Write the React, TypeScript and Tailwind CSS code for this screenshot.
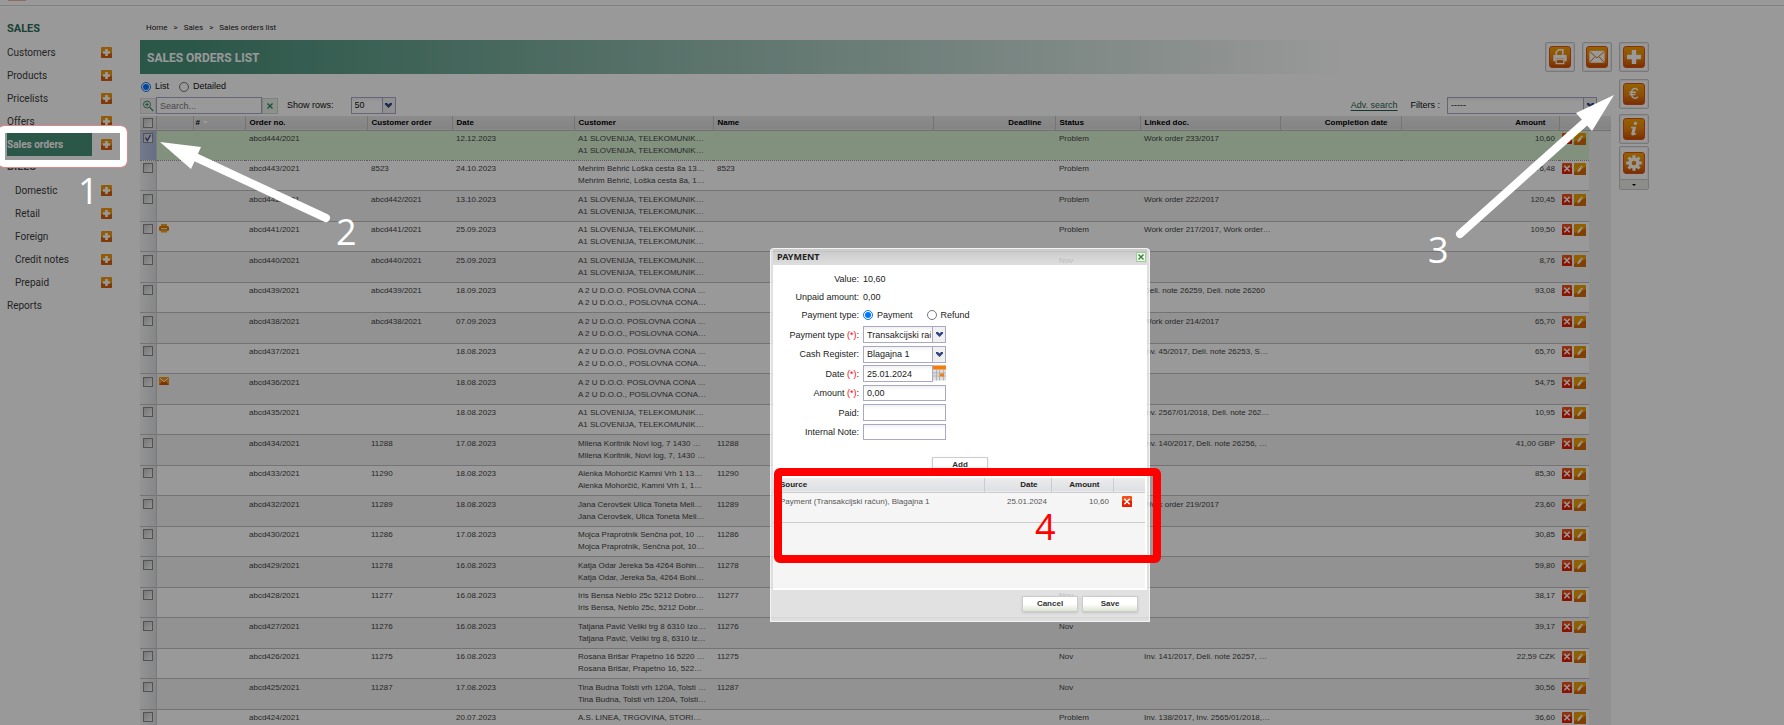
import React, { useState } from 'react';
import clsx from 'clsx';

type Order = {
  no: string;
  customerOrder?: string;
  date: string;
  customer: [string, string];
  name?: string;
  status?: string;
  linked?: string;
  amount: string;
  flag?: 'print' | 'mail';
};

const A1: [string, string] = ['A1 SLOVENIJA, TELEKOMUNIK…', 'A1 SLOVENIJA, TELEKOMUNIK…'];
const A2U: [string, string] = ['A 2 U D.O.O. POSLOVNA CONA …', 'A 2 U D.O.O., POSLOVNA CONA…'];

const orders: Order[] = [
  { no: 'abcd444/2021', date: '12.12.2023', customer: A1, status: 'Problem', linked: 'Work order 233/2017', amount: '10,60' },
  { no: 'abcd443/2021', customerOrder: '8523', date: '24.10.2023', customer: ['Mehrim Behrić Loška cesta 8a 13…', 'Mehrim Behrić, Loška cesta 8a, 1…'], name: '8523', status: 'Problem', amount: '76,48' },
  { no: 'abcd442/2021', customerOrder: 'abcd442/2021', date: '13.10.2023', customer: A1, status: 'Problem', linked: 'Work order 222/2017', amount: '120,45' },
  { no: 'abcd441/2021', customerOrder: 'abcd441/2021', date: '25.09.2023', customer: A1, status: 'Problem', linked: 'Work order 217/2017, Work order…', amount: '109,50', flag: 'print' },
  { no: 'abcd440/2021', customerOrder: 'abcd440/2021', date: '25.09.2023', customer: A1, status: 'Nov', amount: '8,76' },
  { no: 'abcd439/2021', customerOrder: 'abcd439/2021', date: '18.09.2023', customer: A2U, status: 'Nov', linked: 'Deli. note 26259, Deli. note 26260', amount: '93,08' },
  { no: 'abcd438/2021', customerOrder: 'abcd438/2021', date: '07.09.2023', customer: A2U, status: 'Nov', linked: 'Work order 214/2017', amount: '65,70' },
  { no: 'abcd437/2021', date: '18.08.2023', customer: A2U, status: 'Nov', linked: 'Inv. 45/2017, Deli. note 26253, S…', amount: '65,70' },
  { no: 'abcd436/2021', date: '18.08.2023', customer: A2U, status: 'Nov', amount: '54,75', flag: 'mail' },
  { no: 'abcd435/2021', date: '18.08.2023', customer: A1, status: 'Nov', linked: 'Inv. 2567/01/2018, Deli. note 262…', amount: '10,95' },
  { no: 'abcd434/2021', customerOrder: '11288', date: '17.08.2023', customer: ['Milena Koritnik Novi log, 7 1430 …', 'Milena Koritnik, Novi log, 7, 1430 …'], name: '11288', status: 'Nov', linked: 'Inv. 140/2017, Deli. note 26256, …', amount: '41,00 GBP' },
  { no: 'abcd433/2021', customerOrder: '11290', date: '18.08.2023', customer: ['Alenka Mohorčič Kamni Vrh 1 13…', 'Alenka Mohorčič, Kamni Vrh 1, 1…'], name: '11290', status: 'Nov', amount: '85,30' },
  { no: 'abcd432/2021', customerOrder: '11289', date: '18.08.2023', customer: ['Jana Cerovšek Ulica Toneta Meli…', 'Jana Cerovšek, Ulica Toneta Meli…'], name: '11289', status: 'Nov', linked: 'Work order 219/2017', amount: '23,60' },
  { no: 'abcd430/2021', customerOrder: '11286', date: '17.08.2023', customer: ['Mojca Praprotnik Senčna pot, 10 …', 'Mojca Praprotnik, Senčna pot, 10…'], name: '11286', status: 'Nov', amount: '30,85' },
  { no: 'abcd429/2021', customerOrder: '11278', date: '16.08.2023', customer: ['Katja Odar Jereka 5a 4264 Bohin…', 'Katja Odar, Jereka 5a, 4264 Bohi…'], name: '11278', status: 'Nov', amount: '59,80' },
  { no: 'abcd428/2021', customerOrder: '11277', date: '16.08.2023', customer: ['Iris Bensa Neblo 25c 5212 Dobro…', 'Iris Bensa, Neblo 25c, 5212 Dobr…'], name: '11277', status: 'Nov', amount: '38,17' },
  { no: 'abcd427/2021', customerOrder: '11276', date: '16.08.2023', customer: ['Tatjana Pavič Veliki trg 8 6310 Izo…', 'Tatjana Pavič, Veliki trg 8, 6310 Iz…'], name: '11276', status: 'Nov', amount: '39,17' },
  { no: 'abcd426/2021', customerOrder: '11275', date: '16.08.2023', customer: ['Rosana Brišar Prapetno 16 5220 …', 'Rosana Brišar, Prapetno 16, 522…'], name: '11275', status: 'Nov', linked: 'Inv. 141/2017, Deli. note 26257, …', amount: '22,59 CZK' },
  { no: 'abcd425/2021', customerOrder: '11287', date: '17.08.2023', customer: ['Tina Budna Tolsti vrh 120A, Tolsti …', 'Tina Budna, Tolsti vrh 120A, Tolsti…'], name: '11287', status: 'Nov', amount: '30,56' },
  { no: 'abcd424/2021', date: '20.07.2023', customer: ['A.S. LINEA, TRGOVINA, STORI…', ''], status: 'Problem', linked: 'Inv. 138/2017, Inv. 2565/01/2018,…', amount: '36,60' },
];

type MenuEntry = { label: string; heading?: boolean; sub?: boolean; active?: boolean; add?: boolean };

const menu: MenuEntry[] = [
  { label: 'SALES', heading: true },
  { label: 'Customers', add: true },
  { label: 'Products', add: true },
  { label: 'Pricelists', add: true },
  { label: 'Offers', add: true },
  { label: 'Sales orders', add: true, active: true },
  { label: 'BILLS', heading: true },
  { label: 'Domestic', sub: true, add: true },
  { label: 'Retail', sub: true, add: true },
  { label: 'Foreign', sub: true, add: true },
  { label: 'Credit notes', sub: true, add: true },
  { label: 'Prepaid', sub: true, add: true },
  { label: 'Reports' },
];

const SmallPlus = () => (
  <svg viewBox="0 0 11 11" className="size-[11px]">
    <rect width="11" height="11" rx="1" fill="#f09a10" />
    <rect y="6" width="11" height="5" rx="1" fill="#d8620c" />
    <path d="M4.2 2h2.6v2.2H9v2.6H6.8V9H4.2V6.8H2V4.2h2.2z" fill="#fff" />
  </svg>
);

const DeleteIcon = () => (
  <svg viewBox="0 0 10 11" className="h-[11px] w-[10px]">
    <rect width="10" height="11" rx="1" fill="#f0501a" />
    <rect y="5" width="10" height="6" rx="1" fill="#e81e00" />
    <path d="M2.3 2.800l5.400 5.400M7.700 2.800L2.300 8.200" stroke="#fff" strokeWidth="1.5" />
  </svg>
);

const EditIcon = () => (
  <svg viewBox="0 0 12 12" className="size-3">
    <rect width="12" height="12" rx="1" fill="#f0a000" />
    <path d="M0 12V9L12 4v8z" fill="#d86c06" />
    <path d="M3.4 9.600l.5-2.500 3.300-4.600 1.800 1.300-3.400 4.500z" fill="#fff" />
    <path d="M6.400 3.700l1.800 1.500" stroke="#d88a00" strokeWidth=".7" />
  </svg>
);

const RowPrinter = () => (
  <svg viewBox="0 0 10 9" className="h-[9px] w-[10px]">
    <rect x="2" y="0" width="6" height="3" fill="#f0a020" />
    <rect y="2" width="10" height="5" rx="1.5" fill="#e07808" />
    <rect x="2" y="4" width="6" height="1" fill="#fbe0b0" />
    <rect x="2" y="5.500" width="6" height="3" fill="#f0a020" />
  </svg>
);

const RowMail = () => (
  <svg viewBox="0 0 10 8" className="h-2 w-[10px]">
    <rect width="10" height="8" rx="1" fill="#f39a18" />
    <path d="M0 8l3.600-4L5 5.200 6.400 4 10 8z" fill="#d85208" />
    <path d="M.8 1l4.200 3.800L9.200 1" fill="none" stroke="#fff" strokeWidth=".9" />
  </svg>
);

const Chevron = () => (
  <svg viewBox="0 0 7 5" className="h-[5px] w-[7px]">
    <path d="M0 0h2l1.500 1.600L5 0h2v1.400L3.500 5 0 1.400z" fill="#2f4585" />
  </svg>
);

const toolIcons: Record<string, React.ReactNode> = {
  Print: (
    <>
      <path d="M6.500 9V5.500l2.500-2.700h4.500V9" fill="none" stroke="#fff" strokeWidth="1.6" />
      <path d="M3.500 8.500h14v6.500H15V12H6v3H3.500z" fill="#fff" />
      <path d="M6.500 13h8v4.500h-8z" fill="none" stroke="#fff" strokeWidth="1.3" />
    </>
  ),
  Mail: (
    <>
      <rect x="2.500" y="4" width="16" height="12.500" fill="#fff" />
      <path d="M2.500 4.500l8 7 8-7M2.500 16.500l6-6.500M18.500 16.500l-6-6.500" fill="none" stroke="#d4700c" strokeWidth="1" />
    </>
  ),
  Add: <path d="M8.200 3.200h4.600v5h5v4.600h-5v5H8.200v-5h-5V8.200h5z" fill="#fff" />,
  Payment: (
    <path
      d="M14.600 6.600C13.700 5.200 12.800 4.700 11.700 4.700c-2.400 0-3.800 2.300-3.800 5.100s1.400 5.200 3.800 5.200c1.100 0 2-.4 2.900-1.600M5.600 8.700h7M5.600 11.100h6.300"
      fill="none"
      stroke="#fff"
      strokeWidth="1.500"
    />
  ),
  Info: (
    <>
      <circle cx="12" cy="4.600" r="1.800" fill="#fff" />
      <path d="M7.600 8.200h5.200l-1.800 7.100 2-.5-.4 1.300c-1.600 1.400-5.400 2-5 -.5l1.500-5.800H7.200z" fill="#fff" />
    </>
  ),
  Settings: (
    <>
      <circle cx="10.500" cy="10.500" r="4.200" fill="none" stroke="#fff" strokeWidth="3.600" />
      <path
        d="M10.500 2.300v3M10.500 15.700v3M2.300 10.500h3M15.700 10.500h3M4.700 4.700l2.200 2.200M14.100 14.100l2.200 2.200M4.700 16.300l2.200-2.200M14.100 6.900l2.200-2.200"
        stroke="#fff"
        strokeWidth="3.200"
      />
    </>
  ),
};

function ToolButton({ name, menu }: { name: string; menu?: boolean }) {
  return (
    <button
      aria-label={name}
      className="flex w-[30px] shrink-0 flex-col items-center rounded-xs border border-[#cacaca] bg-[#fdfdfd] shadow-[inset_0_0_0_1px_#eee]"
    >
      <span className={clsx('flex items-center', menu ? 'h-8' : 'h-7')}>
        <svg
          viewBox="0 0 21 21"
          className="size-[22px] rounded-[3px] border border-[#e0501a] bg-linear-to-b from-[#f8a400] via-[#ee860c] to-[#cc5004]"
        >
          {toolIcons[name]}
        </svg>
      </span>
      {menu && (
        <span className="flex h-[10px] w-full items-center justify-center border-t border-[#ccc] bg-[#ececea]">
          <svg viewBox="0 0 4 2" className="h-0.5 w-1">
            <path d="M0 0h4L2 2z" fill="#000" />
          </svg>
        </span>
      )}
    </button>
  );
}

function Sidebar() {
  return (
    <nav className="w-[140px] shrink-0 pt-3 pl-[7px] font-[Roboto,sans-serif] text-[10px] text-[#3c3c3c]">
      {menu.map((m) => (
        <div key={m.label} className="flex h-[23px] items-center">
          {m.heading ? (
            <h2 className={clsx('text-[11px] font-bold', m.label === 'SALES' ? 'text-[#2f6d5a]' : 'text-[#555]')}>{m.label}</h2>
          ) : (
            <a
              href="#"
              className={clsx(
                'flex h-full w-[85px] items-center',
                m.sub && 'pl-2',
                m.active && 'bg-[#49917a] font-bold text-white'
              )}
            >
              {m.label}
            </a>
          )}
          {m.add && (
            <button aria-label={`Add ${m.label}`} className="ml-[9px]">
              <SmallPlus />
            </button>
          )}
        </div>
      ))}
    </nav>
  );
}

function RowCheckbox({ label, checked, onChange }: { label: string; checked: boolean; onChange: () => void }) {
  return (
    <span className="relative block size-[10px]">
      <input
        type="checkbox"
        aria-label={label}
        checked={checked}
        onChange={onChange}
        className="block size-[10px] appearance-none border border-[#8a8a8a] bg-linear-to-br from-[#c8c8ca] to-[#f6f6f6]"
      />
      {checked && (
        <svg viewBox="0 0 10 10" className="pointer-events-none absolute inset-0 size-[10px]">
          <path d="M2.500 4.500l1.800 3 3.200-5.500" fill="none" stroke="#3a4a9a" strokeWidth="1.4" />
        </svg>
      )}
    </span>
  );
}

function Toolbar() {
  const [view, setView] = useState('list');
  return (
    <div className="text-[9px] text-[#111]">
      <div className="flex h-5 items-center gap-[14px] pt-[6px]">
        <label className="flex items-center gap-1">
          <input type="radio" name="view" className="ml-px size-[10px]" checked={view === 'list'} onChange={() => setView('list')} />
          List
        </label>
        <label className="flex items-center gap-1">
          <input type="radio" name="view" className="-ml-1 size-[10px]" checked={view === 'detailed'} onChange={() => setView('detailed')} />
          Detailed
        </label>
      </div>
      <div className="flex items-center pt-[3px] pb-0.5">
        <button aria-label="Find" className="flex size-4 items-center justify-center border border-[#ddd] bg-[#f1f1f1]">
          <svg viewBox="0 0 12 12" className="size-3" fill="none" stroke="#3d8c66">
            <circle cx="5" cy="4.500" r="3.500" />
            <path d="M5 2.800v3.400M3.300 4.500h3.400M7.600 7.200l3.600 3.800" strokeWidth="1.2" />
          </svg>
        </button>
        <input
          aria-label="Search"
          placeholder="Search..."
          className="h-[17px] w-[106px] border border-[#a9a9cc] bg-white px-[3px] placeholder:text-[#777]"
        />
        <button aria-label="Clear" className="flex size-4 items-center justify-center border border-[#d0d8d0] bg-[#eaf2ea]">
          <svg viewBox="0 0 6 6" className="size-1.5" stroke="#2f8468" strokeWidth="1.4">
            <path d="M.5.5l5 5M5.500.5l-5 5" />
          </svg>
        </button>
        <label className="ml-[9px] flex items-center gap-[17px]">
          Show rows:
          <Select options={['50']} className="w-[45px]" />
        </label>
        <a href="#" className="ml-auto text-[#2a5f50] underline underline-offset-2">
          Adv. search
        </a>
        <label className="mr-[14px] ml-[13px] flex items-center gap-[7px]">
          Filters :
          <Select options={['-----']} className="w-[150px]" />
        </label>
      </div>
    </div>
  );
}

function Select({ options, className, id }: { options: string[]; className?: string; id?: string }) {
  return (
    <span className={clsx('relative flex h-[17px] border border-[#a9a9c4] bg-linear-to-b from-[#f1f1f3] to-white to-30%', className)}>
      <select id={id} className="mr-[14px] w-full min-w-0 appearance-none pl-[3px] outline-none">
        {options.map((o) => (
          <option key={o}>{o}</option>
        ))}
      </select>
      <span className="pointer-events-none absolute inset-y-0 right-0 flex w-[13px] items-center justify-center border-l border-[#a9a9c4] bg-[#f0f0f0]">
        <Chevron />
      </span>
    </span>
  );
}

function OrdersTable() {
  const [selected, setSelected] = useState<string[]>(['abcd444/2021']);
  const toggle = (no: string) => setSelected((s) => (s.includes(no) ? s.filter((n) => n !== no) : [...s, no]));

  const th = 'border-r border-[#c2c2c4] px-1 font-bold';
  return (
    <table className="w-full table-fixed border-collapse text-[8px] leading-3 text-[#444]">
      <colgroup>
        <col className="w-4" />
        <col className="w-[37px]" />
        <col className="w-[52px]" />
        <col className="w-[122px]" />
        <col className="w-[85px]" />
        <col className="w-[122px]" />
        <col className="w-[139px]" />
        <col className="w-[220px]" />
        <col className="w-[122px]" />
        <col className="w-[85px]" />
        <col className="w-[140px]" />
        <col className="w-[121px]" />
        <col />
        <col className="w-[30px]" />
        <col className="w-[22px]" />
      </colgroup>
      <thead>
        <tr className="h-[14px] border-b border-[#bbb] bg-linear-to-b from-[#e9e9ea] to-[#dcdcde] text-left text-black">
          <th className="border-r border-[#c2c2c4] pl-[3px]">
            <RowCheckbox label="Select all" checked={false} onChange={() => setSelected(orders.map((o) => o.no))} />
          </th>
          <th className={th} />
          <th className="border-r border-[#c2c2c4] pl-0.5 font-bold">
            <span className="flex items-center gap-[3px]">
              #
              <svg viewBox="0 0 5 3" className="h-[3px] w-[5px]">
                <path d="M0 0h5L2.500 3z" fill="#fff" />
              </svg>
            </span>
          </th>
          <th className={th}>Order no.</th>
          <th className={th}>Customer order</th>
          <th className={th}>Date</th>
          <th className={th}>Customer</th>
          <th className={th}>Name</th>
          <th className="border-r border-[#c2c2c4] pr-[13px] text-right font-bold">Deadline</th>
          <th className={th}>Status</th>
          <th className={th}>Linked doc.</th>
          <th className="border-r border-[#c2c2c4] pr-[13px] text-right font-bold">Completion date</th>
          <th className="border-r border-[#c2c2c4] pr-[13px] text-right font-bold">Amount</th>
          <th colSpan={2} />
        </tr>
      </thead>
      <tbody>
        {orders.map((o, i) => {
          const on = selected.includes(o.no);
          const tall = i > 0 && i % 2 === 0;
          return (
            <tr
              key={o.no}
              className={clsx(
                'align-top whitespace-nowrap [&>td]:overflow-hidden [&>td]:px-1',
                tall ? 'h-[31px] [&>td]:pt-[3px]' : 'h-[30px] [&>td]:pt-0.5',
                on ? 'border-b border-dotted border-[#999] bg-[#d9f0d3]' : 'border-b border-[#c0c0c0]',
                !on && (tall ? 'bg-[#f3f3f3]' : 'bg-white')
              )}
            >
              <td
                className={clsx(
                  'border-r border-[#ccc] bg-linear-to-r px-[3px]!',
                  on ? 'from-[#bfcbe4] to-[#a9b8dc]' : 'from-[#f6f6f6] to-[#dfe1e4]'
                )}
              >
                <RowCheckbox label={`Select ${o.no}`} checked={on} onChange={() => toggle(o.no)} />
              </td>
              <td className="px-0.5!">
                {o.flag === 'print' && <RowPrinter />}
                {o.flag === 'mail' && <RowMail />}
              </td>
              <td />
              <td>{o.no}</td>
              <td>{o.customerOrder}</td>
              <td>{o.date}</td>
              <td>
                {o.customer[0]}
                <br />
                {o.customer[1]}
              </td>
              <td>{o.name}</td>
              <td />
              <td>{o.status}</td>
              <td>{o.linked}</td>
              <td />
              <td className="text-right">{o.amount}</td>
              <td className="px-[3px]!">
                <span className="flex items-center gap-0.5">
                  <button aria-label={`Delete ${o.no}`}>
                    <DeleteIcon />
                  </button>
                  <button aria-label={`Edit ${o.no}`}>
                    <EditIcon />
                  </button>
                </span>
              </td>
              <td className="border-b border-[#f0f0f0] bg-[#f0f0f0]" />
            </tr>
          );
        })}
      </tbody>
    </table>
  );
}

const field = 'w-[83px] border border-[#a9a9c4] bg-linear-to-b from-[#f1f1f3] to-white to-30% px-[3px] outline-none';
const dialogButton =
  'h-4 w-14 border border-[#ccc] bg-linear-to-b from-white from-50% to-[#dde5d3] text-[8px] font-bold text-[#333] shadow-sm';

type FormRowProps = { label: string; id?: string; required?: boolean; className?: string; children: React.ReactNode };

function FormRow({ label, id, required, className, children }: FormRowProps) {
  const text = (
    <>
      {label}
      {required && <span className="text-[#ff0000]"> (*)</span>}:
    </>
  );
  return (
    <div className={clsx('flex items-center gap-1', className)}>
      {id ? (
        <label htmlFor={id} className="w-[86px] text-right">
          {text}
        </label>
      ) : (
        <span className="w-[86px] text-right">{text}</span>
      )}
      {children}
    </div>
  );
}

function PaymentDialog() {
  const [kind, setKind] = useState('payment');
  return (
    <section
      role="dialog"
      aria-label="Payment"
      className="absolute top-[248px] left-[770px] flex h-[374px] w-[380px] flex-col rounded-t-sm border border-white/60 bg-white/70 px-0.5 text-[9px] leading-3 text-[#222]"
    >
      <header className="flex h-4 items-center justify-between bg-linear-to-b from-black/10 to-transparent pr-px pl-1 font-['Noto_Sans',sans-serif]">
        <h2 className="font-bold text-[#222]">PAYMENT</h2>
        <button aria-label="Close" className="flex size-[10px] items-center justify-center border border-[#9ccf96] bg-[#eefaec]">
          <svg viewBox="0 0 6 6" className="size-1.5" stroke="#3a7a3a" strokeWidth="1.3">
            <path d="M.5.5l5 5M5.500.5l-5 5" />
          </svg>
        </button>
      </header>

      <div className="flex flex-1 flex-col bg-white">
        <form className="flex flex-col pt-[5px]">
          <FormRow label="Value" className="h-[18px]">
            <span>10,60</span>
          </FormRow>
          <FormRow label="Unpaid amount" className="h-[18px]">
            <span>0,00</span>
          </FormRow>
          <FormRow label="Payment type" className="h-[18px]">
            <label className="mr-[10px] flex items-center gap-1">
              <input type="radio" name="kind" className="size-[10px]" checked={kind === 'payment'} onChange={() => setKind('payment')} />
              Payment
            </label>
            <label className="flex items-center gap-1">
              <input type="radio" name="kind" className="size-[10px]" checked={kind === 'refund'} onChange={() => setKind('refund')} />
              Refund
            </label>
          </FormRow>
          <div className="flex flex-col gap-[3px] pt-0.5">
            <FormRow label="Payment type" id="payment-type" required className="h-[17px]">
              <Select id="payment-type" options={['Transakcijski račun']} className="w-[83px]" />
            </FormRow>
            <FormRow label="Cash Register" id="register" className="h-4">
              <Select id="register" options={['Blagajna 1']} className="w-[83px]" />
            </FormRow>
            <FormRow label="Date" id="date" required className="h-[17px]">
              <span className="flex w-[83px]">
                <input id="date" defaultValue="25.01.2024" className={clsx(field, 'h-[17px] min-w-0 flex-1')} />
                <svg viewBox="0 0 13 15" className="h-4 w-[13px]">
                  <rect width="13" height="15" fill="#ddd" />
                  <rect width="13" height="4" fill="#f57c0a" />
                  <path d="M0 7.500h13M0 10.500h13M3.500 4v11M6.500 4v11M10.500 4v11" stroke="#aaa" strokeWidth=".8" />
                  <rect x="7" y="8" width="4" height="3" fill="#f57c0a" />
                </svg>
              </span>
            </FormRow>
            <FormRow label="Amount" id="amount" required className="h-4">
              <input id="amount" defaultValue="0,00" className={clsx(field, 'h-4')} />
            </FormRow>
            <FormRow label="Paid" id="paid" className="h-[17px]">
              <input id="paid" className={clsx(field, 'h-[17px]')} />
            </FormRow>
            <FormRow label="Internal Note" id="note" className="h-4">
              <input id="note" className={clsx(field, 'h-4')} />
            </FormRow>
          </div>
          <button type="button" className={clsx(dialogButton, 'mt-[17px] ml-[159px]')}>
            Add
          </button>
        </form>

        <div className="mt-[5px] mr-0.5 mb-0.5 flex-1 bg-[#f5f5f5] text-[8px]">
          <table className="w-full table-fixed border-collapse">
            <colgroup>
              <col />
              <col className="w-[67px]" />
              <col className="w-[62px]" />
              <col className="w-8" />
            </colgroup>
            <thead>
              <tr className="h-[14px] border-b border-[#ccc] bg-linear-to-b from-[#ececee] to-[#dedfe2]">
                <th className="border-r border-[#ccc] pl-[7px] text-left">Source</th>
                <th className="border-r border-[#ccc] pr-[13px] text-right">Date</th>
                <th className="border-r border-[#ccc] pr-[13px] text-right">Amount</th>
                <th />
              </tr>
            </thead>
            <tbody>
              <tr className="h-[30px] border-b border-[#ccc] align-top text-[#555]">
                <td className="pt-[3px] pl-[7px]">Payment (Transakcijski račun), Blagajna 1</td>
                <td className="pt-[3px] pr-1 text-right">25.01.2024</td>
                <td className="pt-[3px] pr-1 text-right">10,60</td>
                <td className="pt-[3px] pl-[9px]">
                  <button aria-label="Delete payment" className="block">
                    <DeleteIcon />
                  </button>
                </td>
              </tr>
            </tbody>
          </table>
        </div>
      </div>

      <footer className="flex h-[31px] justify-end gap-1 pt-[6px] pr-[9px]">
        <button className={dialogButton}>Cancel</button>
        <button className={dialogButton}>Save</button>
      </footer>
    </section>
  );
}

// Numbered steps, frames and arrows drawn over the page
function Guide() {
  const num = "absolute font-['Open_Sans',sans-serif] text-[36px] leading-none";
  return (
    <div className="pointer-events-none absolute inset-0 overflow-hidden">
      <div className="absolute top-[126px] -left-0.5 h-[41px] w-[129px] rounded-md border-[7px] border-white outline outline-[#d88]" />
      <div className="absolute top-[468px] left-[774px] h-[95px] w-[387px] rounded-md border-8 border-[#ff0000]" />
      <svg className="absolute inset-0 size-full" fill="#fff" stroke="#fff" strokeLinecap="round">
        <path d="M195 157L326 218" strokeWidth="8" />
        <path d="M160 142L201 147 191 169z" stroke="none" />
        <path d="M1584 123L1460 234" strokeWidth="8" />
        <path d="M1614 95L1576 113 1592 131z" stroke="none" />
      </svg>
      <span className={clsx(num, 'top-[173px] left-[78px] text-white')}>1</span>
      <span className={clsx(num, 'top-[214px] left-[336px] text-white')}>2</span>
      <span className={clsx(num, 'top-[232px] left-[1428px] text-white')}>3</span>
      <span className={clsx(num, 'top-[509px] left-[1035px] text-[#ff0000]')}>4</span>
    </div>
  );
}

export default function App() {
  return (
    <div className="relative h-screen overflow-hidden bg-white font-['Liberation_Sans',Arial,sans-serif]">
      <div className="h-[6px] border-b border-[#d8d8d8] bg-white pl-2">
        <div className="h-px w-[18px] bg-[#f3b0b0]" />
      </div>
      <div className="flex pr-[135px]">
        <Sidebar />
        <div className="min-w-0 flex-1">
          <div className="flex h-[34px] items-center gap-[6px] pt-[9px] pl-[6px] font-[Roboto,sans-serif] text-[8px] text-[#222]">
            <a href="#">Home</a>
            <span>&gt;</span>
            <a href="#">Sales</a>
            <span>&gt;</span>
            <span>Sales orders list</span>
          </div>
          <div className="flex items-center gap-[7px]">
            <h1 className="flex h-[34px] flex-1 items-center bg-linear-to-r from-[#49917a] from-4% to-transparent to-86% pt-px pl-[7px] font-[Roboto,sans-serif] text-[12px] font-bold text-white">
              SALES ORDERS LIST
            </h1>
            <ToolButton name="Print" />
            <ToolButton name="Mail" />
            <ToolButton name="Add" />
          </div>
          <div className="flex gap-2">
            <div className="min-w-0 flex-1">
              <Toolbar />
              <OrdersTable />
            </div>
            <div className="flex flex-col pt-[5px]">
              <ToolButton name="Payment" />
              <div className="mt-[5px] mb-0.5 flex">
                <ToolButton name="Info" />
              </div>
              <ToolButton name="Settings" menu />
            </div>
          </div>
        </div>
      </div>
      <div className="absolute inset-0 bg-black/40" />
      <PaymentDialog />
      <Guide />
    </div>
  );
}
